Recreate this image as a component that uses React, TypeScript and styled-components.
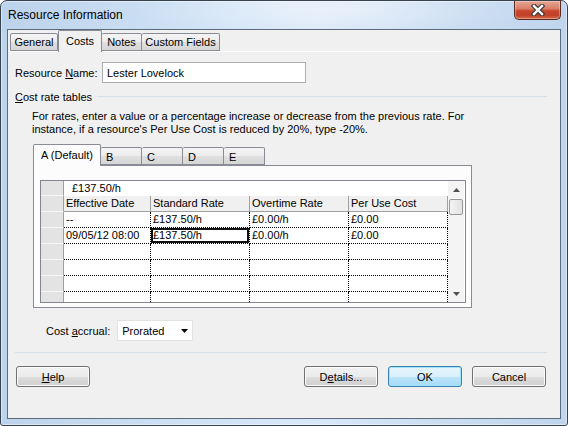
import { Fragment } from 'react';
import styled, { createGlobalStyle } from 'styled-components';

const GlobalStyle = createGlobalStyle`
  html, body {
    margin: 0;
    padding: 0;
  }
  body {
    font-family: 'Liberation Sans', Arial, sans-serif;
    font-size: 11px;
    color: #000;
    background: #fff;
  }
  * {
    box-sizing: border-box;
  }
`;

const Window = styled.div`
  width: 568px;
  height: 426px;
  display: flex;
  flex-direction: column;
  padding: 0 6px 6px;
  border: 1px solid #36434f;
  border-radius: 7px 7px 3px 3px;
  background:
    radial-gradient(ellipse 200px 30px at 330px 8px, rgba(255, 255, 255, 0.45), transparent),
    linear-gradient(90deg, #bcd3ec 0%, #cde0f4 30%, #d9e8f8 55%, #c9dcf1 80%, #bfd5ee 100%);
  box-shadow: inset 0 0 0 1px rgba(255, 255, 255, 0.45);
`;

const TitleBar = styled.div`
  height: 28px;
  display: flex;
  align-items: center;
  justify-content: space-between;
  padding-left: 1px;
`;

const Title = styled.span`
  font-size: 12px;
  color: #000;
`;

const CloseButton = styled.div`
  align-self: flex-start;
  width: 47px;
  height: 19px;
  border: 1px solid #5c2a21;
  border-top: none;
  border-radius: 0 0 5px 5px;
  display: flex;
  align-items: center;
  justify-content: center;
  background: linear-gradient(#e6a596 0%, #d98069 42%, #c6472d 55%, #c24129 80%, #d6704f 100%);
  box-shadow: inset 0 0 0 1px rgba(255, 255, 255, 0.3);
`;

const Client = styled.div`
  flex: 1;
  display: flex;
  flex-direction: column;
  border: 1px solid #5b6c7e;
  background: #f0f0f0;
`;

const TabStrip = styled.div<{ $indent?: number }>`
  display: flex;
  align-items: flex-end;
  height: 21px;
  padding-left: ${({ $indent }) => $indent ?? 0}px;
  position: relative;
  z-index: 1;
`;

const Tab = styled.div<{ $active?: boolean; $width: number; $left?: boolean; $page?: string }>`
  width: ${({ $width }) => $width}px;
  height: ${({ $active }) => ($active ? 22 : 18)}px;
  margin-bottom: ${({ $active }) => ($active ? -1 : 0)}px;
  display: flex;
  align-items: center;
  justify-content: ${({ $left }) => ($left ? 'flex-start' : 'center')};
  padding: ${({ $left, $active }) => ($left ? ($active ? '0 0 2px 7px' : '1px 0 0 5px') : $active ? '0 0 2px' : '0')};
  border: 1px solid #898c95;
  border-bottom: ${({ $active }) => ($active ? 'none' : '1px solid #898c95')};
  border-left-width: ${({ $active }) => ($active ? 1 : 0)}px;
  border-radius: 2px 2px 0 0;
  background: ${({ $active, $page }) =>
    $active ? $page ?? '#f0f0f0' : 'linear-gradient(#f4f4f4 0%, #ececec 50%, #e0e0e0 51%, #d6d6d6 100%)'};
  &:first-child {
    border-left-width: 1px;
  }
  white-space: nowrap;
`;

const Page = styled.div`
  flex: 1;
  display: flex;
  flex-direction: column;
  border-top: 1px solid #fdfdfd;
  padding: 10px 13px 0 7px;
`;

const FieldRow = styled.div`
  display: flex;
  align-items: center;
`;

const Label = styled.label<{ $width?: number }>`
  width: ${({ $width }) => ($width ? `${$width}px` : 'auto')};
  white-space: nowrap;
`;

const Key = styled.span`
  text-decoration: underline;
`;

const TextBox = styled.div`
  width: 204px;
  height: 21px;
  display: flex;
  align-items: center;
  padding-left: 4px;
  border: 1px solid #abadb3;
  background: #fff;
`;

const GroupHeader = styled.div`
  display: flex;
  align-items: center;
  height: 13px;
  margin-top: 7px;
`;

const GroupLine = styled.div`
  flex: 1;
  height: 1px;
  margin-left: 5px;
  background: #d5dfe5;
`;

const Note = styled.p`
  margin: 7px 0 0;
  padding-left: 17px;
  line-height: 13px;
  white-space: nowrap;
`;

const RateTabs = styled.div`
  margin: 8px 0 0 18px;
  display: flex;
  flex-direction: column;
`;

const RatePage = styled.div`
  width: 439px;
  padding: 14px 5px 4px 6px;
  border: 1px solid #898c95;
  background: #fcfcfc;
`;

const GridBox = styled.div`
  height: 123px;
  display: flex;
  border: 1px solid #828790;
  background: #fff;
  overflow: hidden;
`;

const Sheet = styled.div`
  display: grid;
  grid-template-columns: 23px 87px 99px 99px 99px;
  grid-template-rows: 15px 16px;
  grid-auto-rows: 16px;
  align-content: start;
  overflow: hidden;
  font-size: 11px;
`;

const RowHead = styled.div`
  background: #e3e3e3;
  border-right: 1px solid #a0a0a0;
  border-bottom: 1px solid #f6f6f6;
`;

const EditCell = styled.div`
  grid-column: span 4;
  padding-left: 8px;
  line-height: 15px;
  background: #fff;
`;

const ColHead = styled.div`
  padding-left: 2px;
  line-height: 15px;
  background: #f0f0f0;
  border-right: 1px solid #a0a0a0;
  border-bottom: 1px solid #a0a0a0;
  white-space: nowrap;
`;

const Cell = styled.div<{ $selected?: boolean }>`
  padding-left: 2px;
  line-height: 15px;
  border-right: 1px dotted #000;
  border-bottom: 1px dotted #000;
  white-space: nowrap;
  box-shadow: ${({ $selected }) => ($selected ? 'inset 0 0 0 2px #111' : 'none')};
`;

const ScrollBar = styled.div`
  width: 16px;
  display: flex;
  flex-direction: column;
  background: #f4f4f4;
`;

const ScrollArrow = styled.div`
  height: 17px;
  display: flex;
  align-items: center;
  justify-content: center;
`;

const Thumb = styled.div`
  height: 16px;
  margin: 1px 1px 0;
  border: 1px solid #979797;
  border-radius: 2px;
  background: linear-gradient(90deg, #f3f3f3, #e3e3e3);
`;

const Spacer = styled.div`
  flex: 1;
`;

const AccrualRow = styled(FieldRow)`
  margin-top: 12px;
  padding-left: 31px;
  gap: 7px;
`;

const Select = styled.div`
  width: 76px;
  height: 21px;
  display: flex;
  align-items: center;
  justify-content: space-between;
  padding: 0 4px 0 4px;
  border: 1px solid #e2e2e2;
  background: #fff;
`;

const Separator = styled.div`
  height: 1px;
  margin-top: 11px;
  background: #d5dfe5;
`;

const ButtonRow = styled.div`
  display: flex;
  justify-content: space-between;
  margin-top: 13px;
  padding: 0 1px;
`;

const ButtonGroup = styled.div`
  display: flex;
  gap: 10px;
`;

const Button = styled.button<{ $default?: boolean }>`
  width: 74px;
  height: 21px;
  padding: 0;
  font: inherit;
  color: #000;
  border: 1px solid ${({ $default }) => ($default ? '#3c7fb1' : '#707070')};
  border-radius: 3px;
  background: ${({ $default }) =>
    $default
      ? 'linear-gradient(#e8f5fc 0%, #d9f0fc 50%, #bee6fd 51%, #a7d9f5 100%)'
      : 'linear-gradient(#f2f2f2 0%, #ebebeb 50%, #dddddd 51%, #cfcfcf 100%)'};
  box-shadow: inset 0 0 0 1px ${({ $default }) => ($default ? '#9fe3fb' : '#fcfcfc')};
`;

const Triangle = ({ up, color = '#000' }: { up?: boolean; color?: string }) => (
  <svg width="7" height="4" viewBox="0 0 7 4">
    <polygon points={up ? '0,4 7,4 3.5,0' : '0,0 7,0 3.5,4'} fill={color} />
  </svg>
);

const CloseGlyph = () => (
  <svg width="14" height="12" viewBox="0 0 14 12">
    <path d="M3 2 L11 10 M11 2 L3 10" stroke="#3a3a3a" strokeWidth="4.6" strokeLinecap="square" />
    <path d="M3 2 L11 10 M11 2 L3 10" stroke="#fff" strokeWidth="2.4" strokeLinecap="square" />
  </svg>
);

const rates = [
  { date: '--', standard: '£137.50/h', overtime: '£0.00/h', perUse: '£0.00' },
  { date: '09/05/12 08:00', standard: '£137.50/h', overtime: '£0.00/h', perUse: '£0.00' },
  { date: '', standard: '', overtime: '', perUse: '' },
  { date: '', standard: '', overtime: '', perUse: '' },
  { date: '', standard: '', overtime: '', perUse: '' },
  { date: '', standard: '', overtime: '', perUse: '' },
];

export default function App() {
  return (
    <>
      <GlobalStyle />
      <Window>
        <TitleBar>
          <Title>Resource Information</Title>
          <CloseButton>
            <CloseGlyph />
          </CloseButton>
        </TitleBar>
        <Client>
          <TabStrip $indent={2}>
            <Tab $width={48}>General</Tab>
            <Tab $width={44} $active>
              Costs
            </Tab>
            <Tab $width={40}>Notes</Tab>
            <Tab $width={78}>Custom Fields</Tab>
          </TabStrip>
          <Page>
            <FieldRow>
              <Label $width={87}>
                Resource <Key>N</Key>ame:
              </Label>
              <TextBox>Lester Lovelock</TextBox>
            </FieldRow>
            <GroupHeader>
              <span>
                <Key>C</Key>ost rate tables
              </span>
              <GroupLine />
            </GroupHeader>
            <Note>
              For rates, enter a value or a percentage increase or decrease from the previous rate. For
              <br />
              instance, if a resource's Per Use Cost is reduced by 20%, type -20%.
            </Note>
            <RateTabs>
              <TabStrip>
                <Tab $width={68} $active $left $page="#fcfcfc">
                  A (Default)
                </Tab>
                <Tab $width={41} $left>B</Tab>
                <Tab $width={41} $left>C</Tab>
                <Tab $width={41} $left>D</Tab>
                <Tab $width={41} $left>E</Tab>
              </TabStrip>
              <RatePage>
                <GridBox>
                  <Sheet>
                    <RowHead />
                    <EditCell>£137.50/h</EditCell>
                    <RowHead />
                    <ColHead>Effective Date</ColHead>
                    <ColHead>Standard Rate</ColHead>
                    <ColHead>Overtime Rate</ColHead>
                    <ColHead>Per Use Cost</ColHead>
                    {rates.map((r, i) => (
                      <Fragment key={i}>
                        <RowHead />
                        <Cell>{r.date}</Cell>
                        <Cell $selected={i === 1}>{r.standard}</Cell>
                        <Cell>{r.overtime}</Cell>
                        <Cell>{r.perUse}</Cell>
                      </Fragment>
                    ))}
                  </Sheet>
                  <ScrollBar>
                    <ScrollArrow>
                      <Triangle up color="#505050" />
                    </ScrollArrow>
                    <Thumb />
                    <Spacer />
                    <ScrollArrow>
                      <Triangle color="#505050" />
                    </ScrollArrow>
                  </ScrollBar>
                </GridBox>
              </RatePage>
            </RateTabs>
            <AccrualRow>
              <Label>
                Cost <Key>a</Key>ccrual:
              </Label>
              <Select>
                <span>Prorated</span>
                <Triangle />
              </Select>
            </AccrualRow>
            <Separator />
            <ButtonRow>
              <Button>
                <Key>H</Key>elp
              </Button>
              <ButtonGroup>
                <Button>
                  D<Key>e</Key>tails...
                </Button>
                <Button $default>OK</Button>
                <Button>Cancel</Button>
              </ButtonGroup>
            </ButtonRow>
          </Page>
        </Client>
      </Window>
    </>
  );
}
